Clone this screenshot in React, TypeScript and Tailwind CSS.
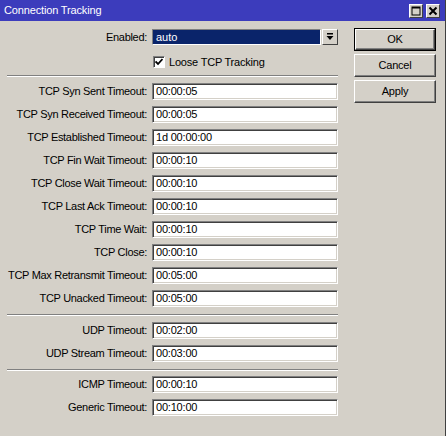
import React from "react";

const font = { fontFamily: '"Liberation Sans", Arial, sans-serif' };

const rows1: [string, string][] = [
  ["TCP Syn Sent Timeout:", "00:00:05"],
  ["TCP Syn Received Timeout:", "00:00:05"],
  ["TCP Established Timeout:", "1d 00:00:00"],
  ["TCP Fin Wait Timeout:", "00:00:10"],
  ["TCP Close Wait Timeout:", "00:00:10"],
  ["TCP Last Ack Timeout:", "00:00:10"],
  ["TCP Time Wait:", "00:00:10"],
  ["TCP Close:", "00:00:10"],
  ["TCP Max Retransmit Timeout:", "00:05:00"],
  ["TCP Unacked Timeout:", "00:05:00"],
];
const rows2: [string, string][] = [
  ["UDP Timeout:", "00:02:00"],
  ["UDP Stream Timeout:", "00:03:00"],
];
const rows3: [string, string][] = [
  ["ICMP Timeout:", "00:00:10"],
  ["Generic Timeout:", "00:10:00"],
];

function Row({ label, value }: { label: string; value: string }) {
  return (
    <div className="flex items-center h-[17px]">
      <div className="w-[145px] pr-[5px] text-right whitespace-nowrap text-black tracking-[-0.3px] text-[11px] leading-[17px]">
        {label}
      </div>
      <div className="w-[186px] h-[17px] bg-white border border-t-[#808080] border-l-[#808080] border-b-white border-r-white shadow-[inset_1px_1px_0_#404040,inset_-1px_-1px_0_#d4d0c8] pl-[3px] text-[11px] leading-[15px] text-black tracking-[-0.2px]">
        {value}
      </div>
    </div>
  );
}

function Sep({ mb }: { mb: string }) {
  return (
    <div className={`w-[331px] mt-[7px] ${mb}`}>
      <div className="h-px bg-[#808080]" />
      <div className="h-px bg-white" />
    </div>
  );
}

function Btn({ label, def }: { label: string; def?: boolean }) {
  return (
    <div
      className={`w-[82px] h-[23px] ${def ? "border border-black" : ""}`}
    >
      <div className="w-full h-full border border-t-white border-l-white border-b-[#404040] border-r-[#404040] shadow-[inset_-1px_-1px_0_#808080] flex items-center justify-center text-[11px] text-black tracking-[-0.2px]">
        {label}
      </div>
    </div>
  );
}

export default function App() {
  return (
    <div
      style={font}
      className="w-[446px] h-[436px] bg-[#d4d0c8] border-r border-r-[#404040] flex flex-col overflow-hidden"
    >
      <div className="h-[21px] bg-[#3c3cbc] flex items-center justify-between pl-[4px] pr-[5px]">
        <span className="text-white text-[11px] tracking-[-0.15px]">Connection Tracking</span>
        <div className="flex gap-[3px]">
          <div className="w-[14px] h-[14px] bg-[#d4d0c8] border border-t-white border-l-white border-b-[#404040] border-r-[#404040] flex items-center justify-center">
            <svg width="10" height="10" viewBox="0 0 10 10">
              <rect x="1" y="1" width="8" height="8" fill="none" stroke="#000" strokeWidth="1" />
              <rect x="1" y="1" width="8" height="1.5" fill="#000" />
            </svg>
          </div>
          <div className="w-[14px] h-[14px] bg-[#d4d0c8] border border-t-white border-l-white border-b-[#404040] border-r-[#404040] flex items-center justify-center">
            <svg width="10" height="10" viewBox="0 0 10 10">
              <path d="M1.5 1.5 L8.5 8.5 M8.5 1.5 L1.5 8.5" stroke="#000" strokeWidth="2" />
            </svg>
          </div>
        </div>
      </div>
      <div className="flex">
        <div className="w-[338px] pl-[7px] pt-[8px] flex flex-col">
          <div className="flex items-center h-[16px]">
            <div className="w-[145px] pr-[5px] text-right text-[11px] tracking-[-0.3px] text-black">Enabled:</div>
            <div className="w-[169px] h-[16px] bg-[#0a246a] border border-t-[#808080] border-l-[#808080] border-b-white border-r-white pl-[3px] text-[11px] leading-[14px] text-white">
              auto
            </div>
            <div className="w-[16px] h-[16px] ml-px border border-t-white border-l-white border-b-[#404040] border-r-[#404040] flex items-center justify-center">
              <svg width="8" height="8" viewBox="0 0 8 8">
                <rect x="1" y="0" width="6" height="1.5" fill="#000" />
                <path d="M0.5 3 L7.5 3 L4 7 Z" fill="#000" />
              </svg>
            </div>
          </div>
          <div className="flex items-center mt-[11px] ml-[146px] h-[12px]">
            <div className="w-[12px] h-[12px] bg-white border border-t-[#808080] border-l-[#808080] border-b-white border-r-white shadow-[inset_1px_1px_0_#404040] flex items-center justify-center">
              <svg width="8" height="8" viewBox="0 0 8 8">
                <path d="M0.5 3.5 L3 6 L7.5 1" fill="none" stroke="#000" strokeWidth="1.8" />
              </svg>
            </div>
            <span className="ml-[4px] text-[11px] tracking-[-0.2px] text-black">Loose TCP Tracking</span>
          </div>
          <Sep mb="mb-[6px]" />
          <div className="flex flex-col gap-[6px]">
            {rows1.map(([l, v]) => (
              <Row key={l} label={l} value={v} />
            ))}
          </div>
          <Sep mb="mb-[6px]" />
          <div className="flex flex-col gap-[6px]">
            {rows2.map(([l, v]) => (
              <Row key={l} label={l} value={v} />
            ))}
          </div>
          <Sep mb="mb-[5px]" />
          <div className="flex flex-col gap-[6px]">
            {rows3.map(([l, v]) => (
              <Row key={l} label={l} value={v} />
            ))}
          </div>
        </div>
        <div className="ml-[16px] pt-[7px] flex flex-col gap-[3px]">
          <Btn label="OK" def />
          <Btn label="Cancel" />
          <Btn label="Apply" />
        </div>
      </div>
    </div>
  );
}
